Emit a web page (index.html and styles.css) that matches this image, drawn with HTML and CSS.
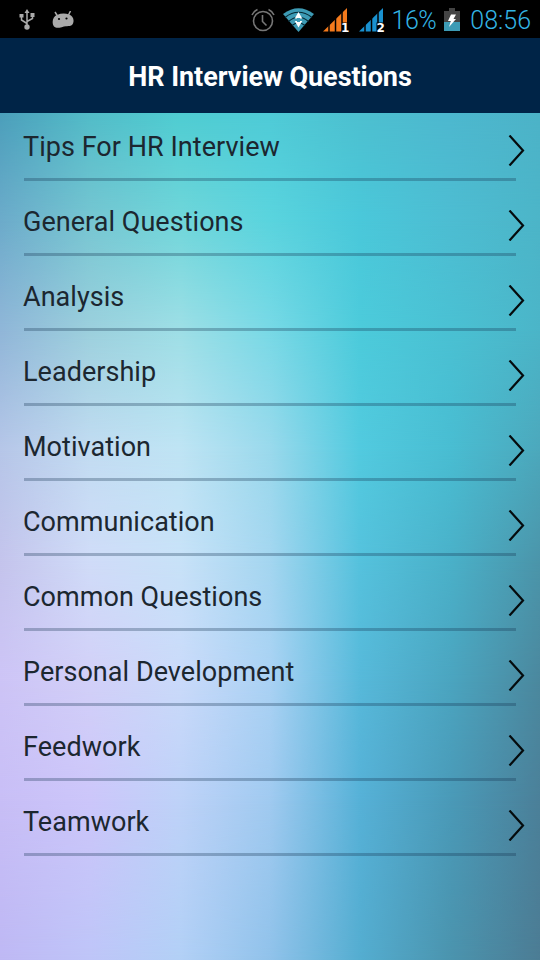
FILE: index.html
```
<!DOCTYPE html>
<html lang="en">
<head>
    <meta charset="utf-8">
    <title>HR Interview Questions</title>
    <link rel="stylesheet" href="styles.css">
</head>
<body>
    <div class="status-bar">
        <svg class="usb" width="16" height="22" viewBox="0 0 16 22">
            <path d="M8 3v14M8 14.500L2.500 11V7.500M8 12.500l5.500-3V6.500" fill="none" stroke="#aaa" stroke-width="1.500"/>
            <path d="M8 0l2.500 4h-5zM.5 5h4v3.500h-4zM11.500 4h4v4h-4z" fill="#aaa"/>
            <circle cx="8" cy="18" r="2.700" fill="#aaa"/>
        </svg>
        <svg class="android" width="22" height="18" viewBox="0 0 22 18">
            <path d="M3 1l2.500 4M18.500 0l-2 4" stroke="#aaa" stroke-width="1.500"/>
            <path d="M5 4Q11 1.500 17 3.500C21 5 22.500 9 21 12.500C19.500 15.500 17 15 14 15.200C10 15.500 5 18.500 2 15.500C-.5 12 .5 5.500 5 4z" fill="#aaa"/>
            <circle cx="7" cy="8" r="1.100"/>
            <circle cx="14.500" cy="7.500" r="1.100"/>
        </svg>
        <div class="status-right">
            <svg class="alarm" width="24" height="24" viewBox="0 0 24 24" fill="none" stroke="#777" stroke-width="1.600">
                <circle cx="12" cy="13" r="9.500"/>
                <path d="M11.500 7V13.500l4 4M1 7Q3 3 6.500 1.500M17.500 1.500Q21 3 23 7"/>
            </svg>
            <svg class="wifi" width="31" height="24" viewBox="0 0 31 24">
                <path d="M0 6Q15.500-5.500 31 6L15.500 24z" fill="#3d9bb5"/>
                <path d="M2 9.500Q15.500-1 29 9.500M5.500 13.500Q15.500 5 25.500 13.500M9 17.500Q15.500 12 22 17.500" fill="none" stroke="#062a35" stroke-width="1.200"/>
                <path d="M15.500 4l3.800 6.500h-7.600zM15.500 19.500l3.800-6.500h-7.600z" fill="#fff"/>
                <path d="M14 10h3v4h-3z" fill="#3d9bb5"/>
            </svg>
            <svg class="signal" width="27" height="29" viewBox="0 0 27 29">
                <path d="M0 23.500L24 0v23.500z" fill="#f47a1c"/>
                <path d="M6 0v24M12.500 0v24M19 0v24" stroke="#000" stroke-width="1.500"/>
                <path d="M19 14.500h6v10h-6z" fill="#000"/>
                <text x="18" y="24">1</text>
            </svg>
            <svg class="signal" width="27" height="29" viewBox="0 0 27 29">
                <path d="M0 23.500L24 0v23.500z" fill="#1991d0"/>
                <path d="M6 0v24M12.500 0v24M19 0v24" stroke="#000" stroke-width="1.500"/>
                <path d="M17.500 14.500h8v10h-8z" fill="#000"/>
                <text x="17.500" y="24">2</text>
            </svg>
            <span class="percent">16%</span>
            <svg class="battery" width="16" height="24" viewBox="0 0 16 24">
                <path d="M0 3h5V0h6v3h5v11H0z" fill="#444"/>
                <path d="M0 14h16v9H0z" fill="#3d9bb5"/>
                <path d="M7 6.500h5L9.500 11H12L5 19l1.800-6H4z" fill="#fff"/>
            </svg>
            <span class="clock">08:56</span>
        </div>
    </div>

    <header>
        <h1>HR Interview Questions</h1>
    </header>

    <main>
        <div class="backdrop">
            <div class="tone tone-1"></div>
            <div class="tone tone-2"></div>
            <div class="tone tone-3"></div>
            <div class="tone tone-4"></div>
            <div class="tone tone-5"></div>
            <div class="tone tone-6"></div>
            <div class="tone tone-7"></div>
            <div class="tone tone-8"></div>
        </div>
        <svg class="defs" width="0" height="0">
            <symbol id="chevron" viewBox="0 0 17 31">
                <path d="M1.500.5L15 15.500L1.500 30.500" fill="none" stroke="#050b0d" stroke-width="2.200"/>
            </symbol>
        </svg>
        <ul>
            <li><span>Tips For HR Interview</span><svg class="chevron"><use href="#chevron"/></svg></li>
            <li><span>General Questions</span><svg class="chevron"><use href="#chevron"/></svg></li>
            <li><span>Analysis</span><svg class="chevron"><use href="#chevron"/></svg></li>
            <li><span>Leadership</span><svg class="chevron"><use href="#chevron"/></svg></li>
            <li><span>Motivation</span><svg class="chevron"><use href="#chevron"/></svg></li>
            <li><span>Communication</span><svg class="chevron"><use href="#chevron"/></svg></li>
            <li><span>Common Questions</span><svg class="chevron"><use href="#chevron"/></svg></li>
            <li><span>Personal Development</span><svg class="chevron"><use href="#chevron"/></svg></li>
            <li><span>Feedwork</span><svg class="chevron"><use href="#chevron"/></svg></li>
            <li><span>Teamwork</span><svg class="chevron"><use href="#chevron"/></svg></li>
        </ul>
    </main>
</body>
</html>
```
FILE: styles.css
```
* {
    box-sizing: border-box;
}
body {
    margin: 0;
    height: 960px;
    display: flex;
    flex-direction: column;
    overflow: hidden;
    font-family: Roboto, sans-serif;
}
svg {
    display: block;
    flex: none;
}

/* status bar */
.status-bar {
    height: 38px;
    display: flex;
    align-items: center;
    padding: 2px 9px 0 19px;
    background: #000;
    color: #33b5e5;
    font-size: 25px;
    font-weight: 300;
    white-space: nowrap;
}
.android {
    margin-left: 17px;
}
.status-right {
    display: flex;
    align-items: center;
    margin-left: auto;
}
.wifi {
    margin-left: 8px;
}
.signal {
    margin: 4px 0 0 9px;
    overflow: visible;
}
.signal text {
    fill: #fff;
    font: bold 12px "DejaVu Sans", sans-serif;
}
.percent {
    margin-left: 6px;
    letter-spacing: -0.5px;
}
.battery {
    margin: 0 10px 0 8px;
}

header {
    height: 75px;
    display: flex;
    align-items: center;
    justify-content: center;
    padding-top: 2px;
    background: #002447;
}
h1 {
    margin: 0;
    color: #fff;
    font-size: 27px;
    font-weight: bold;
    letter-spacing: -0.05px;
    white-space: nowrap;
}

main {
    position: relative;
    flex: 1;
}
ul {
    position: relative;
    margin: 0;
    padding: 0 24px;
    list-style: none;
    display: flex;
    flex-direction: column;
    gap: 7px;
}
li {
    height: 68px;
    display: flex;
    justify-content: space-between;
    align-items: center;
    border-bottom: 3px solid rgba(20, 50, 80, 0.3);
    color: #1c2730;
    font-size: 27px;
}
li span {
    margin-left: -1px;
    padding-top: 2px;
    letter-spacing: 0.04px;
}
.chevron {
    width: 17px;
    height: 31px;
    margin: 10px -9px 0 0;
}

/* horizontal washes, each one fading in below the last */
.backdrop, .tone {
    position: absolute;
    inset: 0;
}
.tone-1 {
    background: linear-gradient(to right, #4b9fbb, #52bcc8, #4fcdd2, #4fcbd7, #4dc0d0, #4db8cf, #4cb3c8);
}
.tone-2 {
    background: linear-gradient(to right, #6cabca, #76c6d2, #70d6da, #5ad4de, #4ac8da, #4dbdd2, #4cb5c8);
    mask-image: linear-gradient(transparent 0, #000 107px);
}
.tone-3 {
    background: linear-gradient(to right, #90b6d8, #9cd0dd, #9edfe6, #78d9e6, #4ccbdb, #4ac1d3, #4bb5c8);
    mask-image: linear-gradient(transparent 107px, #000 217px);
}
.tone-4 {
    background: linear-gradient(to right, #b6c6e8, #c2dcf2, #bfe4f4, #9ad9ec, #52cadf, #49bdd2, #4ca8bc);
    mask-image: linear-gradient(transparent 217px, #000 337px);
}
.tone-5 {
    background: linear-gradient(to right, #c4c4ec, #d0dcf8, #c8e2f8, #a4d6f0, #55c2dd, #4ab1c9, #4b95aa);
    mask-image: linear-gradient(transparent 337px, #000 447px);
}
.tone-6 {
    background: linear-gradient(to right, #cdc4f6, #d2d0f8, #cadafa, #aad2f4, #57b9da, #4ba5c0, #4b889e);
    mask-image: linear-gradient(transparent 447px, #000 567px);
}
.tone-7 {
    background: linear-gradient(to right, #c8bef6, #ccc6fa, #bed2f8, #a0caf0, #56b1d7, #4a9ab8, #4b8099);
    mask-image: linear-gradient(transparent 567px, #000 687px);
}
.tone-8 {
    background: linear-gradient(to right, #beb8f4, #bec5f8, #b2d0f6, #90c2ea, #54add0, #4b94ae, #4c7c94);
    mask-image: linear-gradient(transparent 687px, #000 847px);
}
```
